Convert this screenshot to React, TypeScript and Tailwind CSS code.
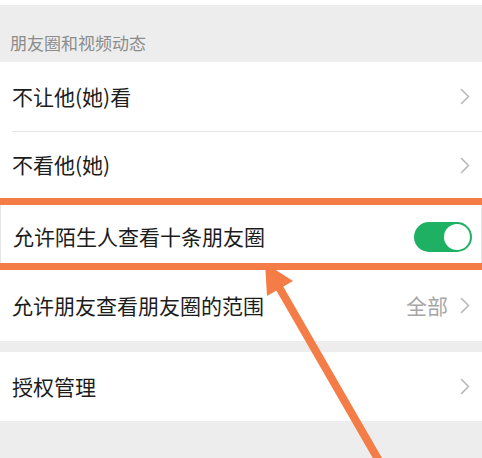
import React from "react";

const font = { fontFamily: '"Noto Sans CJK SC", "Noto Sans", sans-serif' };

const Chevron = () => (
  <svg width="10" height="17" viewBox="0 0 10 17" className="shrink-0">
    <polyline
      points="1.5,1.5 8.5,8.5 1.5,15.5"
      fill="none"
      stroke="#b8b8b8"
      strokeWidth="1.6"
      strokeLinecap="round"
      strokeLinejoin="round"
    />
  </svg>
);

const Toggle = () => (
  <div className="w-[58px] h-[30px] rounded-full bg-[#1eb163] flex items-center justify-end p-[2px]">
    <div className="w-[26px] h-[26px] rounded-full bg-white" />
  </div>
);

const rows1 = [
  { key: 1, label: "不让他(她)看", h: "h-[69px]" },
  { key: 2, label: "不看他(她)", h: "h-[66px]" },
];

const App = () => {
  return (
    <div
      className="relative w-[482px] h-[458px] overflow-hidden bg-[#ededed] text-[#1c1c1c]"
      style={font}
    >
      <div className="h-[5px] bg-white" />
      <div className="h-[57px] flex items-end pb-[7px] pl-[10px] text-[17px] text-[#8c8c8c]">
        朋友圈和视频动态
      </div>

      <div className="bg-white">
        {rows1.map((row, i) => (
          <div key={row.key}>
            <div className={`${row.h} flex items-center justify-between pl-[12px] pr-[12px]`}>
              <p className="text-[21px]">{row.label}</p>
              <Chevron />
            </div>
            {i === 0 && <div className="ml-[12px] h-px bg-[#e6e6e6]" />}
          </div>
        ))}

        <div className="border-y-[7px] border-[#f47c46]">
          <div className="h-[58px] flex items-center justify-between pt-[5px] pl-[12px] pr-[9px] border-x border-[#e4e4e4]">
            <p className="text-[21px]">允许陌生人查看十条朋友圈</p>
            <Toggle />
          </div>
        </div>

        <div className="h-[71px] flex items-center justify-between pl-[12px] pr-[12px]">
          <p className="text-[21px]">允许朋友查看朋友圈的范围</p>
          <div className="flex items-center gap-[12px]">
            <span className="text-[21px] text-[#a6a6a6]">全部</span>
            <Chevron />
          </div>
        </div>
      </div>

      <div className="h-[11px]" />

      <div className="bg-white h-[69px] flex items-center justify-between pl-[12px] pr-[12px]">
        <p className="text-[21px]">授权管理</p>
        <Chevron />
      </div>

      {/* annotation arrow */}
      <svg
        className="absolute inset-0 pointer-events-none"
        width="482"
        height="458"
        viewBox="0 0 482 458"
      >
        <line
          x1="276"
          y1="282"
          x2="382"
          y2="466"
          stroke="#f47c46"
          strokeWidth="8"
        />
        <polygon points="265,263 293,281 267,296" fill="#f47c46" />
      </svg>
    </div>
  );
};

export default App;
